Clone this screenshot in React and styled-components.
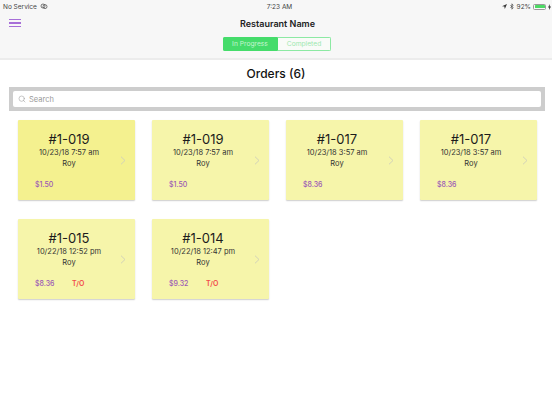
import React from 'react';
import styled, { createGlobalStyle } from 'styled-components';
import { Search as SearchIcon } from 'lucide-react';

const Global = createGlobalStyle`
  html, body { margin: 0; padding: 0; background: #fff; }
  body { font-family: Inter, "Liberation Sans", sans-serif; }
  * { box-sizing: border-box; }
`;
const Page = styled.div`width: 552px; height: 414px; overflow: hidden; background: #fff;`;
const Header = styled.header`
  background: #f7f7f7; height: 60px; border-bottom: 2px solid #ececec;
  display: flex; flex-direction: column;
`;
const Status = styled.div`
  height: 13px; padding: 0 1px 0 3px; display: grid; grid-template-columns: 1fr auto 1fr; align-items: center;
  font-size: 6.5px; color: #444; font-weight: 400;
`;
const StatusLeft = styled.div`display: flex; align-items: center; gap: 3px;`;
const StatusTime = styled.div`padding-left: 5px;`;
const StatusRight = styled.div`display: flex; align-items: center; justify-content: flex-end; gap: 3px;`;
const Battery = styled.div`
  width: 13px; height: 6px; margin-left: -1px; border: 0.5px solid #999; border-radius: 1.5px; padding: 0.5px; display: flex;
`;
const BatteryFill = styled.div`flex: 1; background: #4cd964; border-radius: 0.5px;`;
const Bolt = styled.svg`margin-left: -1px;`;
const NavRow = styled.div`
  height: 20px; padding: 0 9px; display: grid; grid-template-columns: 1fr auto 1fr; align-items: center;
`;
const Menu = styled.button`
  width: 12px; height: 8px; padding: 0; border: 0; background: none; display: flex; flex-direction: column; justify-content: space-between;
  span { display: block; height: 1.3px; background: #a76fd8; }
`;
const Title = styled.div`font-size: 9px; font-weight: 600; color: #222; padding-left: 3px;`;
const SegWrap = styled.div`display: flex; justify-content: center; margin-top: 4px; padding-left: 2px;`;
const Seg = styled.div`
  display: flex; width: 108px; height: 14px; border-radius: 2px; overflow: hidden;
`;
const SegItem = styled.div`
  display: flex; align-items: center; justify-content: center; font-size: 6.7px; font-weight: 400;
  width: 54px;
  background: ${p => p.$active ? '#45dc6b' : '#f9fbf8'};
  color: ${p => p.$active ? '#c4f5d0' : '#9be8ae'};
  border: 1px solid ${p => p.$active ? '#45dc6b' : '#8ce9a3'};
  border-left-color: #45dc6b;
`;
const Heading = styled.h1`
  margin: 0; height: 27px; display: flex; align-items: center; justify-content: center;
  font-size: 12px; font-weight: 500; color: #111;
`;
const SearchBar = styled.div`
  margin: 0 7px 0 9px; height: 24px; background: #cdcdcd; padding: 4px;
`;
const SearchInput = styled.div`
  height: 16px; background: #fff; border-radius: 2px; display: flex; align-items: center; gap: 3.5px; padding-left: 4.5px;
  font-size: 7.5px; color: #999;
`;
const Grid = styled.div`
  display: grid; grid-template-columns: repeat(4, 116.5px); column-gap: 17.5px; row-gap: 18.5px; padding: 9px 0 0 18px;
`;
const Card = styled.div`
  height: 80px; border-radius: 1px; box-shadow: 0 1px 1.5px rgba(0,0,0,.2);
  background: ${p => p.$selected ? '#f4f18f' : '#f6f5aa'};
  position: relative; display: flex; flex-direction: column; align-items: center; padding: 11px 14.5px 0 0; color: #333;
`;
const OrderNo = styled.div`font-size: 13px; line-height: 16px; font-weight: 400; color: #1c1c1c;`;
const OrderDate = styled.div`font-size: 7.5px; line-height: 10px; margin-top: 1px; color: #333;`;
const Name = styled.div`font-size: 7.5px; line-height: 10px; margin-top: 1px; color: #333;`;
const Footer = styled.div`
  align-self: flex-start; display: flex; margin-top: 11px; padding-left: 17px; font-size: 7px; line-height: 10px; font-weight: 500;
`;
const Price = styled.span`color: #9b59b6; width: 37px;`;
const Tag = styled.span`color: #f24b4b; font-weight: 600;`;
const Chevron = styled.svg`position: absolute; right: 9px; top: 36px; width: 6px; height: 9px;`;

const orders = [
  { no: '#1-019', date: '10/23/18 7:57 am', price: '$1.50', selected: true },
  { no: '#1-019', date: '10/23/18 7:57 am', price: '$1.50' },
  { no: '#1-017', date: '10/23/18 3:57 am', price: '$8.36' },
  { no: '#1-017', date: '10/23/18 3:57 am', price: '$8.36' },
  { no: '#1-015', date: '10/22/18 12:52 pm', price: '$8.36', to: true },
  { no: '#1-014', date: '10/22/18 12:47 pm', price: '$9.32', to: true },
];

export default function App() {
  return (
    <Page>
      <Global />
      <Header>
        <Status>
          <StatusLeft>
            No Service
            <svg width="8" height="7" viewBox="0 0 8 7" fill="none" stroke="#444" strokeWidth=".7">
              <circle cx="3" cy="3" r="2" /><circle cx="5" cy="3.6" r="2" />
            </svg>
          </StatusLeft>
          <StatusTime>7:23 AM</StatusTime>
          <StatusRight>
            <svg width="5" height="5" viewBox="0 0 5 5"><path d="M5 0 L0 2.2 L2.3 2.6 L2.8 5 Z" fill="#333" /></svg>
            <svg width="4" height="7" viewBox="0 0 4 7" fill="none" stroke="#333" strokeWidth=".6"><path d="M.4 2 L3.2 4.8 L1.9 6.2 V.8 L3.2 2.2 L.4 5" /></svg>
            <span>92%</span>
            <Battery><BatteryFill /></Battery>
            <Bolt width="3" height="6" viewBox="0 0 3 6"><path d="M1.8 0 L0 3.4 H1.2 L1 6 L3 2.4 H1.7 Z" fill="#333" /></Bolt>
          </StatusRight>
        </Status>
        <NavRow>
          <Menu><span /><span /><span /></Menu>
          <Title>Restaurant Name</Title>
        </NavRow>
        <SegWrap>
          <Seg>
            <SegItem $active>In Progress</SegItem>
            <SegItem>Completed</SegItem>
          </Seg>
        </SegWrap>
      </Header>
      <Heading>Orders (6)</Heading>
      <SearchBar>
        <SearchInput>
          <SearchIcon size={8} color="#999" strokeWidth={1.6} />
          Search
        </SearchInput>
      </SearchBar>
      <Grid>
        {orders.map((o, i) => (
          <Card key={i} $selected={o.selected}>
            <OrderNo>{o.no}</OrderNo>
            <OrderDate>{o.date}</OrderDate>
            <Name>Roy</Name>
            <Footer>
              <Price>{o.price}</Price>
              {o.to && <Tag>T/O</Tag>}
            </Footer>
            <Chevron viewBox="0 0 6 9" fill="none" stroke="#d2d2b8" strokeWidth="1"><path d="M1 .7 L5 4.5 L1 8.3" /></Chevron>
          </Card>
        ))}
      </Grid>
    </Page>
  );
}
